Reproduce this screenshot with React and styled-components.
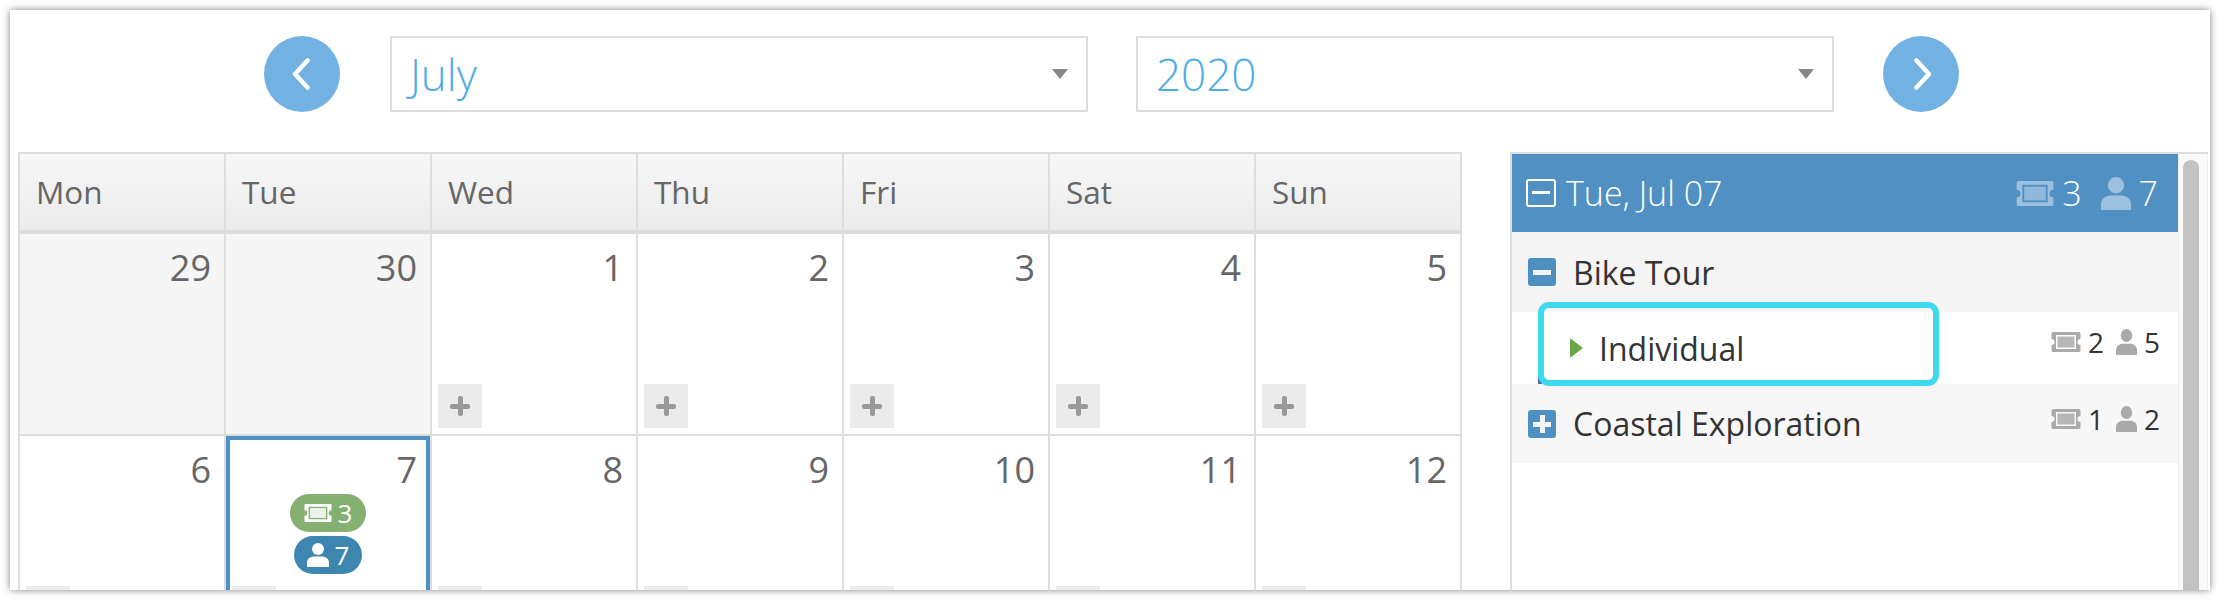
import React from 'react'
import styled, { createGlobalStyle } from 'styled-components'

const GlobalStyle = createGlobalStyle`
  html, body {
    margin: 0;
    height: 600px;
    overflow: hidden;
    background: #fff;
    font-family: "Open Sans", "Noto Sans", sans-serif;
  }
`

const WEEKDAYS = ['Mon', 'Tue', 'Wed', 'Thu', 'Fri', 'Sat', 'Sun']
const DAYS = [
  { day: 29, muted: true },
  { day: 30, muted: true },
  { day: 1 },
  { day: 2 },
  { day: 3 },
  { day: 4 },
  { day: 5 },
  { day: 6 },
  { day: 7, selected: true, tickets: 3, people: 7 },
  { day: 8 },
  { day: 9 },
  { day: 10 },
  { day: 11 },
  { day: 12 },
]

const TicketIcon = ({ width, height, color }) => (
  <svg width={width} height={height} viewBox="0 0 30 20" preserveAspectRatio="none">
    <path
      fill={color}
      fillRule="evenodd"
      d="M2 0H28a1.5 1.5 0 0 1 1.5 1.5V7a3 3 0 0 0 0 6v5.5A1.5 1.5 0 0 1 28 20H2a1.5 1.5 0 0 1-1.500-1.500V13a3 3 0 0 0 0-6V1.500A1.500 1.500 0 0 1 2 0ZM5 3V17H25V3Z"
    />
    <rect x="6.500" y="4.500" width="17" height="11" fill={color} opacity="0.85" />
  </svg>
)

const PersonIcon = ({ width, height, color }) => (
  <svg width={width} height={height} viewBox="0 0 22 24" preserveAspectRatio="none">
    <circle cx="11" cy="6" r="6" fill={color} />
    <path fill={color} d="M0 24V19.500C0 15.500 4 13.500 7 13.500H15C18 13.500 22 15.500 22 19.500V24Z" />
  </svg>
)

const Chevron = ({ flip }) => (
  <svg width="20" height="32" viewBox="0 0 20 32">
    <path
      d={flip ? 'M5.500 2.500L18 16L5.500 29.500' : 'M15.500 2.500L3 16L15.500 29.500'}
      fill="none"
      stroke="#fff"
      strokeWidth="4.500"
      strokeLinecap="round"
      strokeLinejoin="round"
    />
  </svg>
)

const App = () => (
  <Card>
    <GlobalStyle />
    <Toolbar>
      <RoundButton><Chevron /></RoundButton>
      <Select>July<Caret /></Select>
      <Select>2020<Caret /></Select>
      <RoundButton><Chevron flip /></RoundButton>
    </Toolbar>
    <Content>
      <Calendar>
        {WEEKDAYS.map(name => <Weekday key={name}>{name}</Weekday>)}
        {DAYS.map(item => (
          <Day key={item.day} $muted={item.muted} $selected={item.selected}>
            <DayNumber>{item.day}</DayNumber>
            {item.tickets && (
              <Badges>
                <Badge $color="#84b071" $width={76}>
                  <TicketIcon width={28} height={18} color="#fff" />{item.tickets}
                </Badge>
                <Badge $color="#3c86b0" $width={68}>
                  <PersonIcon width={22} height={24} color="#fff" />{item.people}
                </Badge>
              </Badges>
            )}
            {!item.muted && <AddButton />}
          </Day>
        ))}
      </Calendar>
      <Panel>
        <PanelBody>
          <DateHeader>
            <OutlineToggle />
            <DateTitle>Tue, Jul 07</DateTitle>
            <HeaderStat>
              <TicketIcon width={38} height={25} color="#9cc0de" /><span>3</span>
            </HeaderStat>
            <HeaderStat>
              <PersonIcon width={30} height={33} color="#9cc0de" /><span>7</span>
            </HeaderStat>
          </DateHeader>
          <TourRow $height={80} $bg="#f4f4f4">
            <Toggle />
            <RowTitle>Bike Tour</RowTitle>
          </TourRow>
          <OptionRow>
            <Triangle />
            <RowTitle>Individual</RowTitle>
            <RowStats $lift={12}>
              <TicketIcon width={30} height={20} color="#aaa" /><StatValue>2</StatValue>
              <PersonIcon width={21} height={26} color="#aaa" /><StatValue>5</StatValue>
            </RowStats>
            <Highlight />
          </OptionRow>
          <TourRow $height={79} $bg="#f7f7f7">
            <Toggle $plus />
            <RowTitle>Coastal Exploration</RowTitle>
            <RowStats $lift={9}>
              <TicketIcon width={30} height={20} color="#aaa" /><StatValue>1</StatValue>
              <PersonIcon width={21} height={26} color="#aaa" /><StatValue>2</StatValue>
            </RowStats>
          </TourRow>
        </PanelBody>
        <ScrollTrack><ScrollThumb /></ScrollTrack>
      </Panel>
    </Content>
  </Card>
)

export default App

const Card = styled.div`
  width: 2200px;
  height: 580px;
  margin: 10px 0 0 10px;
  box-sizing: border-box;
  overflow: hidden;
  background: #fff;
  box-shadow: 0 0 7px rgba(0, 0, 0, 0.5);
`

const Toolbar = styled.div`
  display: flex;
  align-items: center;
  gap: 48px;
  padding: 26px 0 0 254px;
  margin-bottom: 40px;
`

const RoundButton = styled.div`
  display: flex;
  align-items: center;
  justify-content: center;
  width: 76px;
  height: 76px;
  border-radius: 50%;
  background: #72b2e2;
  &:first-child {
    margin-right: 2px;
  }
  &:last-child {
    margin-left: 1px;
  }
`

const Select = styled.div`
  display: flex;
  align-items: center;
  justify-content: space-between;
  width: 698px;
  height: 76px;
  box-sizing: border-box;
  padding: 0 18px 0 18px;
  border: 2px solid #ddd;
  font-size: 44px;
  font-weight: 300;
  color: #4fade6;
`

const Caret = styled.span`
  width: 0;
  height: 0;
  border-left: 8px solid transparent;
  border-right: 8px solid transparent;
  border-top: 10px solid #888;
`

const Content = styled.div`
  display: flex;
  align-items: flex-start;
  padding-left: 8px;
`

const Calendar = styled.div`
  display: grid;
  grid-template-columns: repeat(7, 206px);
  width: 1444px;
  box-sizing: border-box;
  border-top: 2px solid #ddd;
  border-left: 2px solid #ddd;
  flex-shrink: 0;
`

const Weekday = styled.div`
  width: 188px;
  height: 76px;
  line-height: 76px;
  padding-left: 16px;
  border-right: 2px solid #ddd;
  border-bottom: 4px solid #ddd;
  background: linear-gradient(#f7f7f7, #ebebeb);
  font-size: 31.5px;
  color: #666;
`

const Day = styled.div`
  display: flex;
  flex-direction: column;
  width: 185px;
  height: 194px;
  padding: 0 13px 6px 6px;
  border-right: 2px solid #ddd;
  border-bottom: 2px solid #ddd;
  background: ${props => (props.$muted ? '#f5f5f5' : '#fff')};
  box-shadow: ${props => (props.$selected ? 'inset 0 0 0 4px #4f90c2' : 'none')};
`

const DayNumber = styled.div`
  padding-top: 10px;
  text-align: right;
  font-size: 36px;
  line-height: 48px;
  color: #666;
`

const Badges = styled.div`
  display: flex;
  flex-direction: column;
  align-items: center;
  gap: 4px;
  margin: 0 -13px 0 -6px;
`

const Badge = styled.div`
  display: flex;
  align-items: center;
  justify-content: center;
  gap: 6px;
  width: ${props => props.$width}px;
  height: 38px;
  border-radius: 19px;
  background: ${props => props.$color};
  color: #fff;
  font-size: 26px;
`

const AddButton = styled.div`
  position: relative;
  width: 44px;
  height: 44px;
  margin-top: auto;
  flex-shrink: 0;
  background: #ebebeb;
  &::before,
  &::after {
    content: '';
    position: absolute;
    background: #999;
    border-radius: 2px;
  }
  &::before {
    left: 12px;
    right: 12px;
    top: 20px;
    height: 5px;
  }
  &::after {
    top: 12px;
    bottom: 12px;
    left: 20px;
    width: 5px;
  }
`

const Panel = styled.div`
  display: flex;
  width: 698px;
  height: 440px;
  margin-left: 48px;
  box-sizing: border-box;
  border-top: 2px solid #ddd;
  border-left: 2px solid #ddd;
  flex-shrink: 0;
`

const PanelBody = styled.div`
  width: 666px;
  flex-shrink: 0;
`

const DateHeader = styled.div`
  display: flex;
  align-items: center;
  height: 78px;
  padding: 0 20px 0 14px;
  background: #5190c2;
  color: #fff;
  font-size: 34px;
  font-weight: 300;
`

const OutlineToggle = styled.span`
  position: relative;
  width: 30px;
  height: 28px;
  box-sizing: border-box;
  border: 2px solid #fff;
  border-radius: 3px;
  margin-right: 10px;
  &::after {
    content: '';
    position: absolute;
    left: 4px;
    right: 4px;
    top: 10px;
    height: 3px;
    background: #fff;
  }
`

const DateTitle = styled.span`
  flex: 1;
`

const HeaderStat = styled.span`
  display: flex;
  align-items: center;
  gap: 8px;
  margin-left: 19px;
`

const TourRow = styled.div`
  display: flex;
  align-items: center;
  height: ${props => props.$height}px;
  padding: 0 12px 0 16px;
  background: ${props => props.$bg};
`

const OptionRow = styled.div`
  position: relative;
  display: flex;
  align-items: center;
  height: 72px;
  padding: 0 12px 0 58px;
  background: #fff;
  &::before {
    content: '';
    position: absolute;
    left: 26px;
    bottom: 0;
    width: 4px;
    height: 10px;
    background: #4a6fb5;
  }
`

const Toggle = styled.span`
  position: relative;
  width: 28px;
  height: 28px;
  margin-right: 18px;
  border-radius: 3px;
  background: #4f90c2;
  &::before {
    content: '';
    position: absolute;
    left: 5px;
    right: 5px;
    top: 12px;
    height: 5px;
    background: #f4f4f4;
  }
  &::after {
    content: '';
    display: ${props => (props.$plus ? 'block' : 'none')};
    position: absolute;
    top: 5px;
    bottom: 5px;
    left: 12px;
    width: 5px;
    background: #f4f4f4;
  }
`

const Triangle = styled.span`
  width: 0;
  height: 0;
  margin-right: 17px;
  border-top: 10px solid transparent;
  border-bottom: 10px solid transparent;
  border-left: 13px solid #6aa845;
`

const RowTitle = styled.span`
  flex: 1;
  font-size: 32px;
  color: #333;
  margin-left: -1px;
`

const RowStats = styled.span`
  display: flex;
  align-items: center;
  gap: 6px;
  margin-top: -${props => props.$lift}px;
  font-size: 28px;
  color: #333;
`

const StatValue = styled.span`
  min-width: 16px;
  margin: 0 6px 0 1px;
`

const Highlight = styled.div`
  position: absolute;
  left: 26px;
  top: -10px;
  width: 401px;
  height: 84px;
  box-sizing: border-box;
  border: 6px solid #3fd9ef;
  border-radius: 11px;
`

const ScrollTrack = styled.div`
  display: flex;
  justify-content: center;
  width: 30px;
  padding: 6px 4px 0 0;
  box-sizing: border-box;
  background: #f9f9f9;
  border-left: 1px solid #eee;
  border-right: 1px solid #eee;
`

const ScrollThumb = styled.div`
  width: 16px;
  height: 100%;
  border-radius: 8px 8px 0 0;
  background: #c2c2c2;
`
